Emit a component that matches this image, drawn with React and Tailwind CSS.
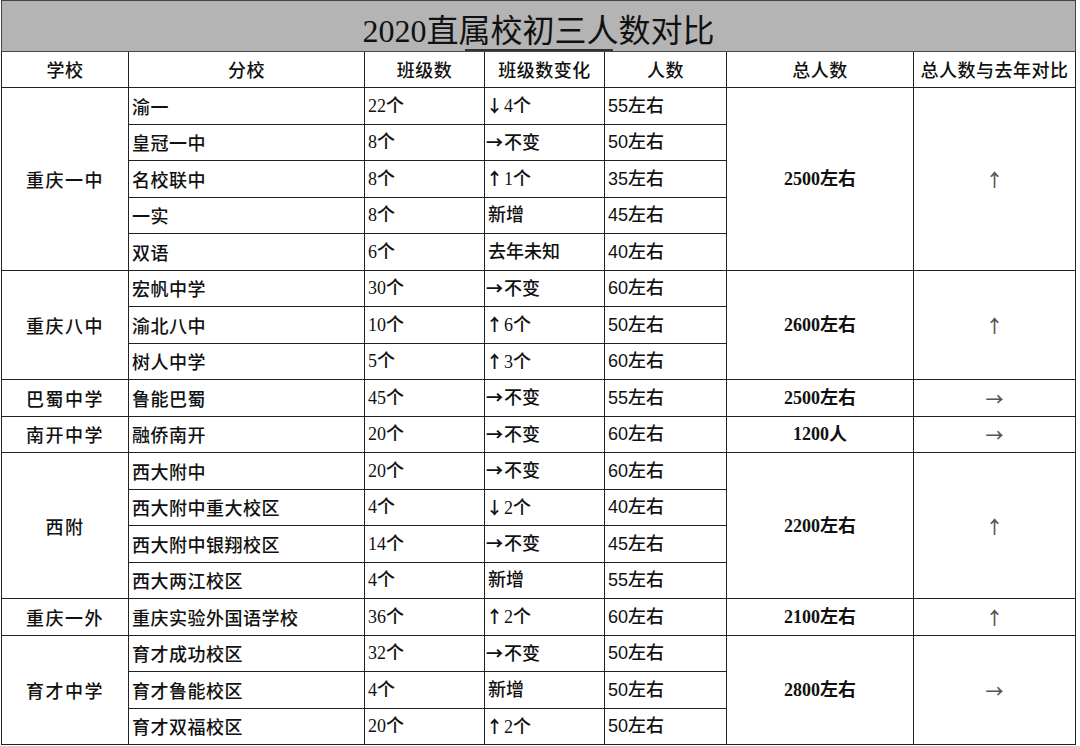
import React from 'react';

const groups = [
    {
        school: '重庆一中', total: '2500左右', cmp: '↑',
        rows: [
            ['渝一', '22个', ['↓', '4个'], '55左右'],
            ['皇冠一中', '8个', ['→', '不变'], '50左右'],
            ['名校联中', '8个', ['↑', '1个'], '35左右'],
            ['一实', '8个', ['', '新增'], '45左右'],
            ['双语', '6个', ['', '去年未知'], '40左右'],
        ],
    },
    {
        school: '重庆八中', total: '2600左右', cmp: '↑',
        rows: [
            ['宏帆中学', '30个', ['→', '不变'], '60左右'],
            ['渝北八中', '10个', ['↑', '6个'], '50左右'],
            ['树人中学', '5个', ['↑', '3个'], '60左右'],
        ],
    },
    {
        school: '巴蜀中学', total: '2500左右', cmp: '→',
        rows: [['鲁能巴蜀', '45个', ['→', '不变'], '55左右']],
    },
    {
        school: '南开中学', total: '1200人', cmp: '→',
        rows: [['融侨南开', '20个', ['→', '不变'], '60左右']],
    },
    {
        school: '西附', total: '2200左右', cmp: '↑',
        rows: [
            ['西大附中', '20个', ['→', '不变'], '60左右'],
            ['西大附中重大校区', '4个', ['↓', '2个'], '40左右'],
            ['西大附中银翔校区', '14个', ['→', '不变'], '45左右'],
            ['西大两江校区', '4个', ['', '新增'], '55左右'],
        ],
    },
    {
        school: '重庆一外', total: '2100左右', cmp: '↑',
        rows: [['重庆实验外国语学校', '36个', ['↑', '2个'], '60左右']],
    },
    {
        school: '育才中学', total: '2800左右', cmp: '→',
        rows: [
            ['育才成功校区', '32个', ['→', '不变'], '50左右'],
            ['育才鲁能校区', '4个', ['', '新增'], '50左右'],
            ['育才双福校区', '20个', ['↑', '2个'], '50左右'],
        ],
    },
];

const headers = ['学校', '分校', '班级数', '班级数变化', '人数', '总人数', '总人数与去年对比'];
const widths = ['w-[127px]', 'w-[236px]', 'w-[120px]', 'w-[120px]', 'w-[122px]', 'w-[187px]', 'w-[162px]'];

const cell = 'border border-[#222] h-[36.5px] p-0 text-[18px] leading-none text-[#111]';

export default function App() {
    return (
        <div className="relative w-[1080px] h-[746px] overflow-hidden bg-white">
            <table className="table-fixed border-collapse ml-[1px] w-[1074px]">
                <colgroup>
                    {widths.map((w, i) => <col key={i} className={w} />)}
                </colgroup>
                <thead>
                    <tr>
                        <th colSpan={7} className="border border-[#444] bg-[#b4b4b4] h-[51px] pt-[9px] text-center font-normal text-[32px] leading-none text-[#111] font-['Liberation_Serif','Noto_Sans_CJK_SC',serif]">
                            2020直属校初三人数对比
                        </th>
                    </tr>
                    <tr>
                        {headers.map((h, i) => (
                            <th key={i} className="border border-[#222] h-[36px] p-0 text-center font-medium text-[18px] tracking-[0.5px] text-[#111] font-['Noto_Sans_CJK_SC',sans-serif]">
                                {h}
                            </th>
                        ))}
                    </tr>
                </thead>
                <tbody>
                    {groups.map((g) =>
                        g.rows.map((r, j) => (
                            <tr key={g.school + j}>
                                {j === 0 && (
                                    <td rowSpan={g.rows.length} className={`${cell} text-center font-medium tracking-[1.5px] font-['Noto_Sans_CJK_SC',sans-serif]`}>
                                        {g.school}
                                    </td>
                                )}
                                <td className={`${cell} pl-[3px] font-medium tracking-[0.5px] font-['Noto_Sans_CJK_SC',sans-serif]`}>{r[0]}</td>
                                <td className={`${cell} pl-[3px] font-medium font-['Liberation_Serif','Noto_Sans_CJK_SC',serif]`}>{r[1]}</td>
                                <td className={`${cell} pl-[1px] font-medium font-['Liberation_Serif','Noto_Sans_CJK_SC',serif]`}>
                                    {r[2][0] && (
                                        <span className="inline-block w-[18px] text-[17px] font-bold font-['Noto_Sans_CJK_SC',sans-serif]">{r[2][0]}</span>
                                    )}
                                    {!r[2][0] && <span className="inline-block w-[2px]" />}
                                    {r[2][1]}
                                </td>
                                <td className={`${cell} pl-[3px] font-medium font-['Liberation_Sans','Noto_Sans_CJK_SC',sans-serif]`}>{r[3]}</td>
                                {j === 0 && (
                                    <>
                                        <td rowSpan={g.rows.length} className={`${cell} text-center font-bold font-['Liberation_Serif','Noto_Sans_CJK_SC',serif]`}>
                                            {g.total}
                                        </td>
                                        <td rowSpan={g.rows.length} className={`${cell} text-center text-[16px] font-medium text-[#555] font-['Noto_Sans_CJK_SC',sans-serif]`}>
                                            {g.cmp}
                                        </td>
                                    </>
                                )}
                            </tr>
                        ))
                    )}
                </tbody>
            </table>
            <div className="absolute left-[465px] top-[49px] w-[148px] h-[2px] bg-[#333]" />
        </div>
    );
}
